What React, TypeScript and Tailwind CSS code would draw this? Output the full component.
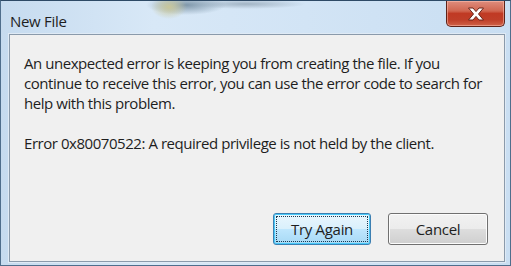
import React from "react";

const font = { fontFamily: '"Open Sans", "Noto Sans", sans-serif' };

function CloseButton() {
  return (
    <button className="relative mr-[5px] flex h-[26px] w-[59px] items-center justify-center rounded-b-[5px] border border-t-0 border-[#5e2218] bg-[linear-gradient(to_bottom,#de8d7d_0%,#d06650_40%,#c03a24_50%,#bf3e28_75%,#cf6248_100%)] shadow-[inset_0_0_0_1px_rgba(255,200,185,0.5)]">
      <svg width="18" height="14" viewBox="0 0 18 14">
        <path
          d="M1.5 1 L6 1 L9 4.6 L12 1 L16.5 1 L11.5 7 L16.5 13 L12 13 L9 9.4 L6 13 L1.5 13 L6.5 7 Z"
          fill="#ffffff"
          stroke="#6a2418"
          strokeWidth="1"
          strokeLinejoin="round"
        />
      </svg>
    </button>
  );
}

function DialogButton({ label, primary }: { label: string; primary?: boolean }) {
  if (primary) {
    return (
      <button className="flex h-[32px] w-[98px] items-center justify-center rounded-[3px] border border-[#3c7fb1] bg-[linear-gradient(to_bottom,#eaf6fd_0%,#d9f0fc_50%,#bee6fd_51%,#a7d9f5_100%)] p-[2px] shadow-[inset_0_0_0_1px_#48c9f8]">
        <span className="flex h-full w-full items-center justify-center border border-dotted border-[#1a3a50] text-[15px] tracking-[-0.3px] text-[#1e1e1e]">
          {label}
        </span>
      </button>
    );
  }
  return (
    <button className="flex h-[32px] w-[100px] items-center justify-center rounded-[3px] border border-[#707070] bg-[linear-gradient(to_bottom,#f2f2f2_0%,#ebebeb_50%,#dddddd_51%,#cfcfcf_100%)] text-[15px] tracking-[-0.3px] text-[#1e1e1e] shadow-[inset_0_0_0_1px_#fcfcfc]">
      {label}
    </button>
  );
}

export default function App() {
  return (
    <div
      style={font}
      className="flex h-[266px] w-[511px] flex-col border border-[#4f6e8c] border-t-[#2e4a66] bg-[radial-gradient(ellipse_18px_12px_at_168px_6px,#c8c69a,transparent),radial-gradient(ellipse_40px_10px_at_185px_4px,#7f97aa,transparent),radial-gradient(ellipse_60px_5px_at_245px_3px,#a2b4c4,transparent),linear-gradient(to_right,#c6dbef_0%,#d8e8f7_30%,#d2e4f5_60%,#c9def2_100%)]"
    >
      {/* TITLE BAR */}
      <div className="flex h-[33px] items-start justify-between">
        <div className="pl-[9px] pt-[10px] text-[15px] leading-5 tracking-[-0.3px] text-[#1e1e1e]">New File</div>
        <CloseButton />
      </div>

      {/* CONTENT PANEL */}
      <div className="mb-[3px] ml-[8px] mr-[5px] flex flex-1 flex-col border border-[#8a9aab] bg-[#f0f0f0] shadow-[0_0_0_1px_#dfeaf5]">
        <div className="px-[14px] pt-[18px] text-[15px] leading-5 tracking-[-0.45px] text-[#1e1e1e]">
          <p>
            An unexpected error is keeping you from creating the file. If you
            <br />
            continue to receive this error, you can use the error code to search for
            <br />
            help with this problem.
          </p>
          <p className="mt-5">Error 0x80070522: A required privilege is not held by the client.</p>
        </div>

        <div className="mt-auto flex justify-end gap-[17px] pb-[16px] pr-[16px]">
          <DialogButton label="Try Again" primary />
          <DialogButton label="Cancel" />
        </div>
      </div>
    </div>
  );
}
